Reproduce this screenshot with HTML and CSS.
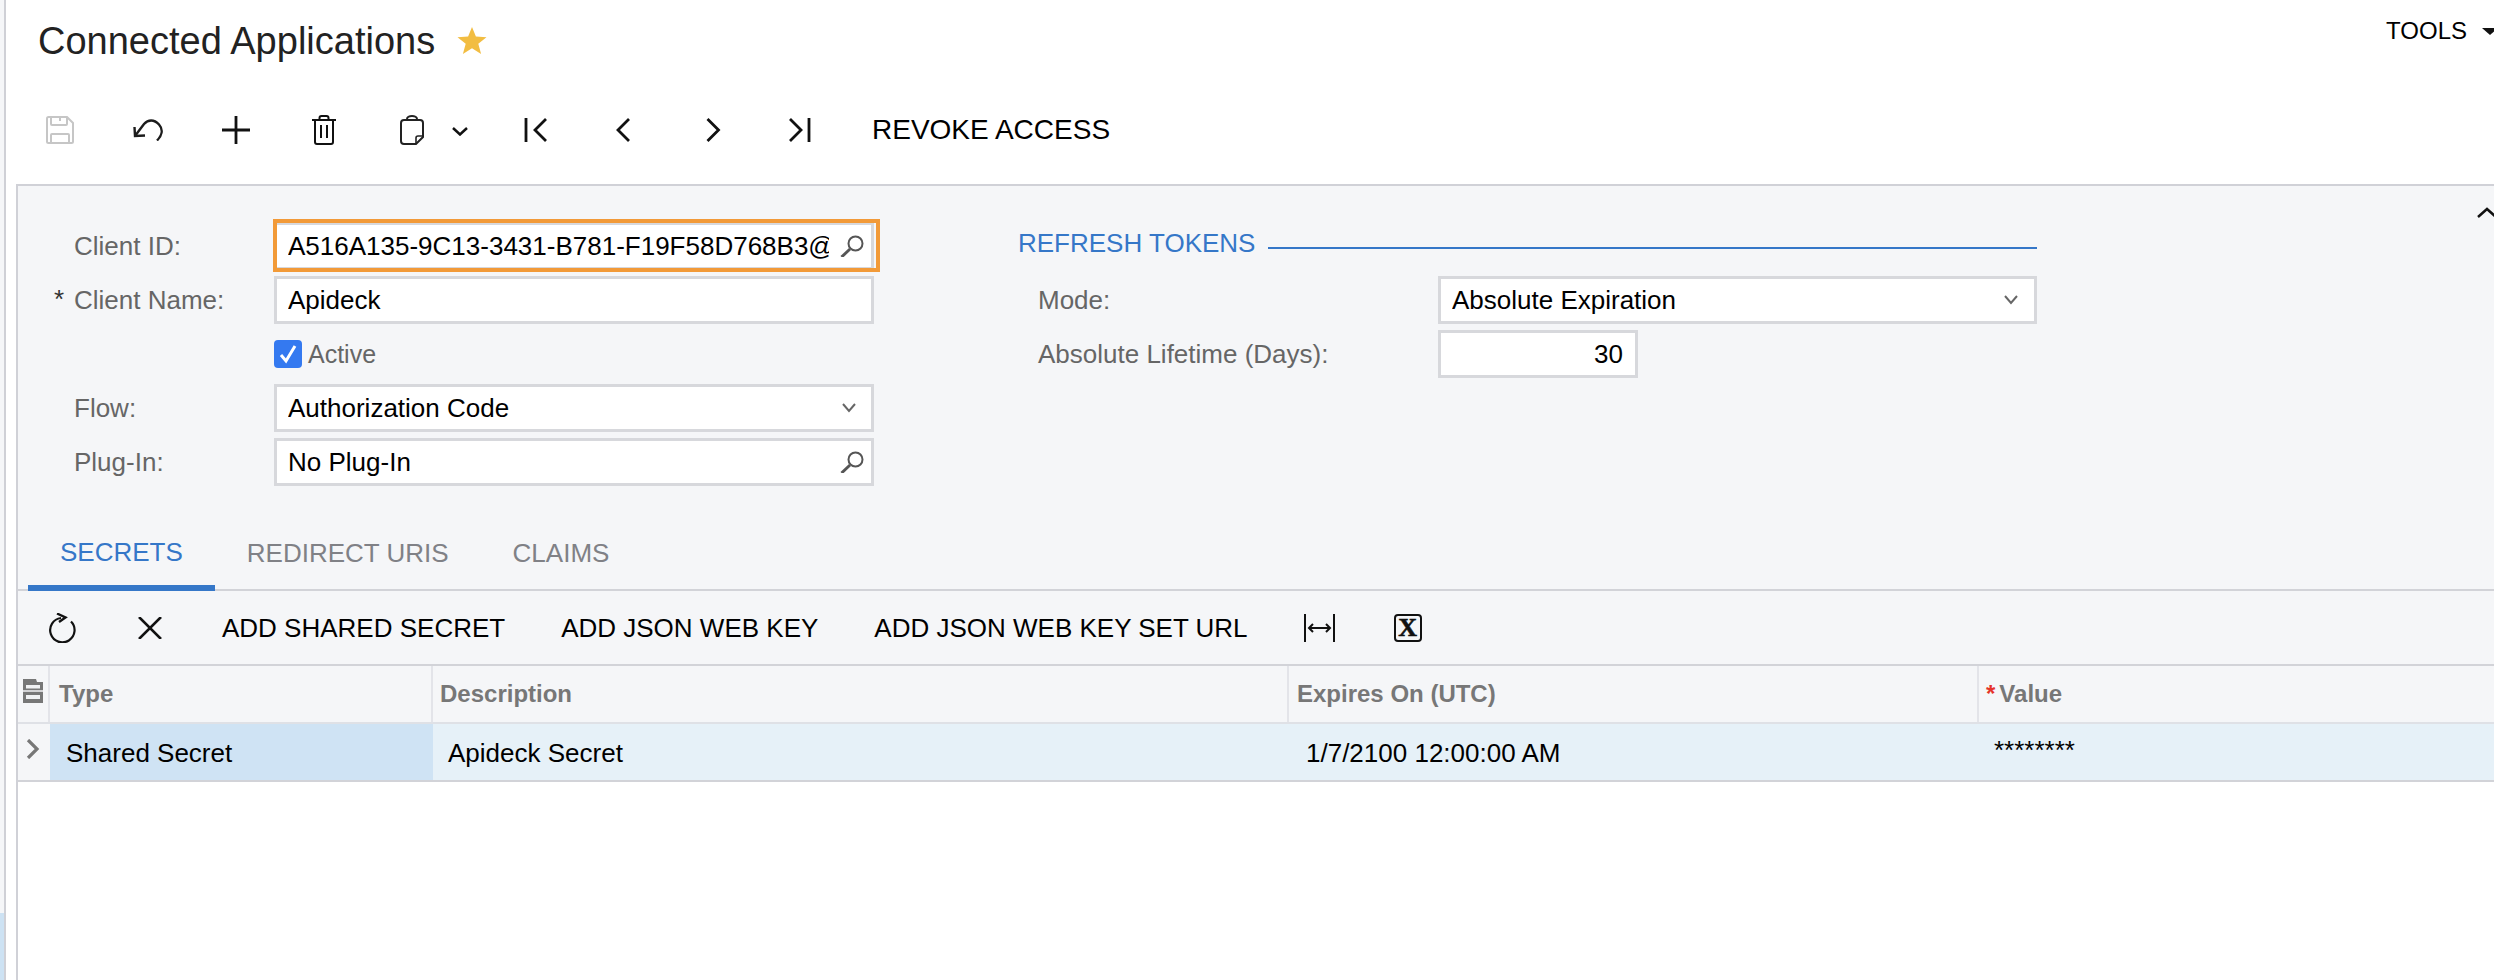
FILE: index.html
```html
<!DOCTYPE html>
<html lang="en">
<head>
<meta charset="utf-8">
<title>Connected Applications</title>
<link rel="stylesheet" href="styles.css">
</head>
<body>
<div class="app">
  <aside class="rail"><div class="rail-fill"></div><div class="rail-sel"></div></aside>
  <main class="main">
    <header class="head">
      <div class="title-wrap">
        <h1 class="title">Connected Applications</h1>
        <svg class="star" width="30" height="27" viewBox="0 0 30 27"><path d="M15 0l3.900 9.600 10.600.6-8.200 6.600 2.800 10.200L15 21.200 5.900 27l2.800-10.200L.5 10.200l10.600-.6z" fill="#f2bd42"/></svg>
      </div>
      <div class="tools"><span>TOOLS</span><i class="caret"></i></div>
    </header>
    <nav class="toolbar">
      <button class="ib"><svg width="28" height="28" viewBox="0 0 28 28" fill="none" stroke="#c6c6c6" stroke-width="2"><path d="M2.500 1h18.500l6 6v18.500a1.500 1.500 0 0 1-1.500 1.500h-23a1.500 1.500 0 0 1-1.500-1.500v-23a1.500 1.500 0 0 1 1.500-1.500z"/><path d="M5 1v7a1 1 0 0 0 1 1h14a1 1 0 0 0 1-1V1M5 27v-8a1 1 0 0 1 1-1h16a1 1 0 0 1 1 1v8"/><path d="M14 1v4"/></svg></button>
      <button class="ib"><svg width="30" height="22" viewBox="0 0 30 22" fill="none" stroke="#1c1c1c" stroke-width="2.400"><path d="M24 21.500c5-5 6.500-11 2-16-5-5.500-11-5-15-.5L2 17"/><path d="M1.500 8l.5 9 10-.5"/></svg></button>
      <button class="ib"><svg width="28" height="28" viewBox="0 0 28 28" fill="none" stroke="#111" stroke-width="2.800"><path d="M14 0v28M0 14h28"/></svg></button>
      <button class="ib"><svg width="24" height="30" viewBox="0 0 24 30" fill="none" stroke="#111" stroke-width="2"><path d="M0 5h24"/><path d="M7.500 5V3a2 2 0 0 1 2-2h5a2 2 0 0 1 2 2v2"/><path d="M3 5v22a2 2 0 0 0 2 2h14a2 2 0 0 0 2-2V5"/><path d="M9 10v13M15 10v13"/></svg></button>
      <button class="ib ib-split"><svg width="24" height="30" viewBox="0 0 24 30" fill="none" stroke="#222" stroke-width="2"><path d="M7 5V4a5 3 0 0 1 10 0v1"/><path d="M4 5h16a3 3 0 0 1 3 3v14l-7 7H4a3 3 0 0 1-3-3V8a3 3 0 0 1 3-3z"/><path d="M23 21h-5a2 2 0 0 0-2 2v6" stroke-width="1.600"/></svg><svg class="ib-chev" width="16" height="9" viewBox="0 0 16 9" fill="none" stroke="#111" stroke-width="2.500"><path d="M1 1l7 6.500L15 1"/></svg></button>
      <button class="ib"><svg width="23" height="24" viewBox="0 0 23 24" fill="none" stroke="#111" stroke-width="2.800"><path d="M2 0v24M22 1L11 12l11 11"/></svg></button>
      <button class="ib"><svg width="15" height="24" viewBox="0 0 15 24" fill="none" stroke="#111" stroke-width="2.800"><path d="M13 1L2 12l11 11"/></svg></button>
      <button class="ib"><svg width="19" height="24" viewBox="0 0 19 24" fill="none" stroke="#111" stroke-width="2.800"><path d="M5.500 1l11 11-11 11"/></svg></button>
      <button class="ib"><svg width="23" height="24" viewBox="0 0 23 24" fill="none" stroke="#111" stroke-width="2.800"><path d="M21 0v24M2 1l11 11L2 23"/></svg></button>
      <button class="tb-text">REVOKE ACCESS</button>
    </nav>
    <section class="panel">
      <div class="form">
        <div class="fields">
          <label class="lbl">Client ID:</label>
          <div class="box focus"><span class="val">A516A135-9C13-3431-B781-F19F58D768B3@</span><svg class="sr" width="25" height="22" viewBox="0 0 25 22" fill="none" stroke="#555" stroke-width="2"><circle cx="15.500" cy="8.500" r="7"/><path d="M10 14l-8.500 8" stroke-width="3"/></svg></div>
          <label class="lbl req">Client Name:</label>
          <div class="box"><span class="val">Apideck</span></div>
          <span></span>
          <div class="check-row"><span class="check"><svg width="18" height="20" viewBox="0 0 18 20" fill="none" stroke="#fff" stroke-width="3"><path d="M2 11l5 6 9-15"/></svg></span><span class="check-lbl">Active</span></div>
          <label class="lbl">Flow:</label>
          <div class="box"><span class="val">Authorization Code</span><svg class="dd" width="16" height="10" viewBox="0 0 16 10" fill="none" stroke="#666" stroke-width="2"><path d="M2 1l6 7 6-7"/></svg></div>
          <label class="lbl">Plug-In:</label>
          <div class="box"><span class="val">No Plug-In</span><svg class="sr" width="25" height="22" viewBox="0 0 25 22" fill="none" stroke="#555" stroke-width="2"><circle cx="15.500" cy="8.500" r="7"/><path d="M10 14l-8.500 8" stroke-width="3"/></svg></div>
        </div>
        <div class="tokens">
          <div class="sec-head"><span class="sec-title">REFRESH TOKENS</span><span class="sec-line"></span></div>
          <div class="tok-grid">
            <label class="lbl">Mode:</label>
            <div class="box box-wide"><span class="val">Absolute Expiration</span><svg class="dd dd-r" width="16" height="10" viewBox="0 0 16 10" fill="none" stroke="#666" stroke-width="2"><path d="M2 1l6 7 6-7"/></svg></div>
            <label class="lbl">Absolute Lifetime (Days):</label>
            <div class="box box-num"><span class="val num">30</span></div>
          </div>
        </div>
        <div class="collapse"><svg width="20" height="11" viewBox="0 0 20 11" fill="none" stroke="#111" stroke-width="2.500"><path d="M1 10l9-8 9 8"/></svg></div>
      </div>
      <div class="tabs">
        <div class="tab active">SECRETS</div>
        <div class="tab">REDIRECT URIS</div>
        <div class="tab">CLAIMS</div>
      </div>
      <div class="gridbar">
        <button class="ib"><svg width="27" height="30" viewBox="0 0 27 30" fill="none" stroke="#111" stroke-width="2.200"><path d="M12 5A12.200 12.200 0 1 0 22 8.500"/><path d="M8 .5l8.500 4-6.500 4.500" stroke-width="2.400"/></svg></button>
        <button class="ib"><svg width="24" height="22" viewBox="0 0 24 22" fill="none" stroke="#111" stroke-width="2.600"><path d="M1 0l22 22M23 0L1 22"/></svg></button>
        <button class="tb-text">ADD SHARED SECRET</button>
        <button class="tb-text">ADD JSON WEB KEY</button>
        <button class="tb-text">ADD JSON WEB KEY SET URL</button>
        <button class="ib"><svg width="31" height="28" viewBox="0 0 31 28" fill="none" stroke="#111" stroke-width="2"><path d="M1 0v28M30 0v28M5 14h21"/><path d="M9 10l-4 4 4 4M22 10l4 4-4 4"/></svg></button>
        <button class="ib"><span class="xl">X</span></button>
      </div>
      <div class="grid">
        <div class="g-row g-head">
          <div class="g-cell g-ctl"><svg width="20" height="24" viewBox="0 0 20 24"><path d="M0 0h13l1 3h6v21H0z" fill="#777"/><path d="M3 6h14v3.500H3zM3 16h14v4H3z" fill="#f0f1f3"/><path d="M0 12h20" stroke="#f0f1f3" stroke-width="1.500"/></svg></div>
          <div class="g-cell">Type</div>
          <div class="g-cell">Description</div>
          <div class="g-cell">Expires On (UTC)</div>
          <div class="g-cell g-last"><span class="star-req">*</span>Value</div>
        </div>
        <div class="g-row g-data">
          <div class="g-cell g-ctl"><svg class="row-arrow" width="14" height="20" viewBox="0 0 14 20" fill="none" stroke="#777" stroke-width="3.200"><path d="M2 1l9 9-9 9"/></svg></div>
          <div class="g-cell sel">Shared Secret</div>
          <div class="g-cell">Apideck Secret</div>
          <div class="g-cell">1/7/2100 12:00:00 AM</div>
          <div class="g-cell g-mask">********</div>
        </div>
      </div>
    </section>
  </main>
</div>
</body>
</html>
```
FILE: styles.css
```css
* { box-sizing: border-box; }
html, body { margin: 0; padding: 0; background: #fff; }
body { font-family: "Liberation Sans", Arial, sans-serif; color: #000; }
button { font: inherit; color: inherit; background: none; border: 0; padding: 0; }

.app { display: flex; width: 2494px; height: 980px; overflow: hidden; }
.rail { flex: none; width: 6px; display: flex; flex-direction: column; border-right: 2px solid #cfd0d6; }
.rail-fill { flex: 1; background: #f5f6f8; }
.rail-sel { height: 67px; background: #cde2f3; }
.main { flex: 1; min-width: 0; display: flex; flex-direction: column; }

.head { display: flex; justify-content: space-between; align-items: flex-start; height: 84px; flex: none; }
.title-wrap { display: flex; align-items: center; gap: 22px; padding: 18px 0 0 32px; }
.title { margin: 0; font-size: 38px; line-height: 46px; font-weight: 400; color: #222; white-space: nowrap; }
.star { flex: none; margin-top: -2px; }
.tools { display: flex; align-items: center; gap: 15px; margin: 16px -4px 0 0; font-size: 24px; line-height: 30px; }
.caret { width: 0; height: 0; border-style: solid; border-width: 7px 8px 0; border-color: #111 transparent transparent; }

.toolbar { flex: none; display: flex; align-items: center; height: 92px; padding: 0 0 0 10px; margin-bottom: 8px; }
.ib { flex: none; width: 88px; height: 40px; display: flex; align-items: center; justify-content: center; }
.ib-split { width: 123px; padding-right: 35px; position: relative; }
.ib-chev { position: absolute; left: 84px; top: 17px; }
.tb-text { flex: none; padding: 0 28px; font-size: 26px; line-height: 40px; white-space: nowrap; }
.toolbar .tb-text { padding-left: 29px; font-size: 28px; }

.panel { flex: 1; margin-left: 10px; border-left: 2px solid #d0d1d7; border-top: 2px solid #d0d1d7; display: flex; flex-direction: column; background: #fff; min-height: 0; }

.form { flex: none; display: flex; align-items: flex-start; background: #f5f6f8; padding: 36px 0 0 56px; height: 328px; }
.fields { flex: none; display: grid; grid-template-columns: 200px 600px; grid-auto-rows: 48px; row-gap: 6px; }
.lbl { display: flex; align-items: center; font-size: 26px; color: #666; white-space: nowrap; position: relative; }
.req::before { content: "*"; position: absolute; left: -20px; top: 8px; font-size: 26px; color: #333; }

.box { display: flex; align-items: center; height: 48px; background: #fff; border: 3px solid #d7d8dc; padding-left: 11px; position: relative; min-width: 0; }
.val { flex: 1; min-width: 0; font-size: 26px; white-space: nowrap; overflow: hidden; }
.focus::after { content: ""; position: absolute; inset: -6px -9px -5px -4px; border: 4px solid #f29a38; }
.sr { flex: none; margin: 0 6px 0 11px; }
.dd { flex: none; margin-right: 14px; }
.dd-r { margin-right: 15px; }

.check-row { display: flex; align-items: center; gap: 6px; }
.check { width: 28px; height: 28px; border-radius: 4px; background: #3479f0; display: flex; align-items: center; justify-content: center; }
.check-lbl { font-size: 25px; color: #666; }

.tokens { flex: none; width: 1019px; margin-left: 144px; }
.sec-head { display: flex; align-items: flex-start; height: 54px; gap: 13px; }
.sec-title { font-size: 26px; line-height: 42px; color: #3577c8; white-space: nowrap; }
.sec-line { flex: 1; height: 2px; background: #3577c8; margin-top: 25px; }
.tok-grid { display: grid; grid-template-columns: 400px 599px; grid-auto-rows: 48px; row-gap: 6px; padding-left: 20px; }
.box-wide { width: 599px; }
.box-num { width: 200px; padding-right: 12px; }
.num { text-align: right; }
.collapse { margin: -15px -3px 0 auto; line-height: 0; }

.tabs { flex: none; display: flex; background: #f5f6f8; height: 77px; padding: 0 0 0 10px; border-bottom: 2px solid #d2d3d8; }
.tab { flex: none; display: flex; align-items: center; height: 75px; padding: 4px 32px 0; font-size: 26px; color: #808186; white-space: nowrap; }
.tab.active { color: #3577c8; height: 77px; padding-bottom: 2px; border-bottom: 6px solid #3577c8; padding-top: 8px; }

.gridbar { flex: none; display: flex; align-items: center; height: 73px; background: #f5f6f8; }
.xl { display: flex; align-items: center; justify-content: center; width: 28px; height: 28px; border: 2.500px solid #111; border-radius: 4px; font: 700 26px/1 "Liberation Serif", serif; color: #111; -webkit-text-stroke: 0.6px #111; }

.grid { flex: none; border-top: 2px solid #d2d3d8; }
.g-row { display: grid; grid-template-columns: 32px 383px 856px 690px 1fr; }
.g-head { height: 58px; background: #f5f6f8; border-bottom: 2px solid #dfe1e6; }
.g-head .g-cell { display: flex; align-items: center; padding-left: 7px; font-size: 24px; font-weight: 700; color: #777; border-right: 2px solid #e3e4e9; white-space: nowrap; }
.g-head .g-cell:nth-child(2) { padding-left: 9px; }
.g-head .g-cell:nth-child(4) { padding-left: 8px; }
.g-head .g-ctl { padding: 0 0 6px 5px; }
.g-head .g-last { border-right: 0; }
.star-req { color: #e5332a; margin-right: 4px; }
.g-data { height: 58px; background: #e6f1f8; border-bottom: 2px solid #d2d3d8; }
.g-data .g-cell { display: flex; align-items: center; padding: 3px 0 0 15px; font-size: 26px; white-space: nowrap; }
.g-data .g-ctl { padding: 0 0 6px 8px; background: #f5f6f8; }
.g-data .sel { background: #cfe3f4; padding-left: 16px; }
.g-data .g-cell:nth-child(4) { padding-left: 17px; }
.g-data .g-mask { padding: 0 0 3px 15px; }
```
